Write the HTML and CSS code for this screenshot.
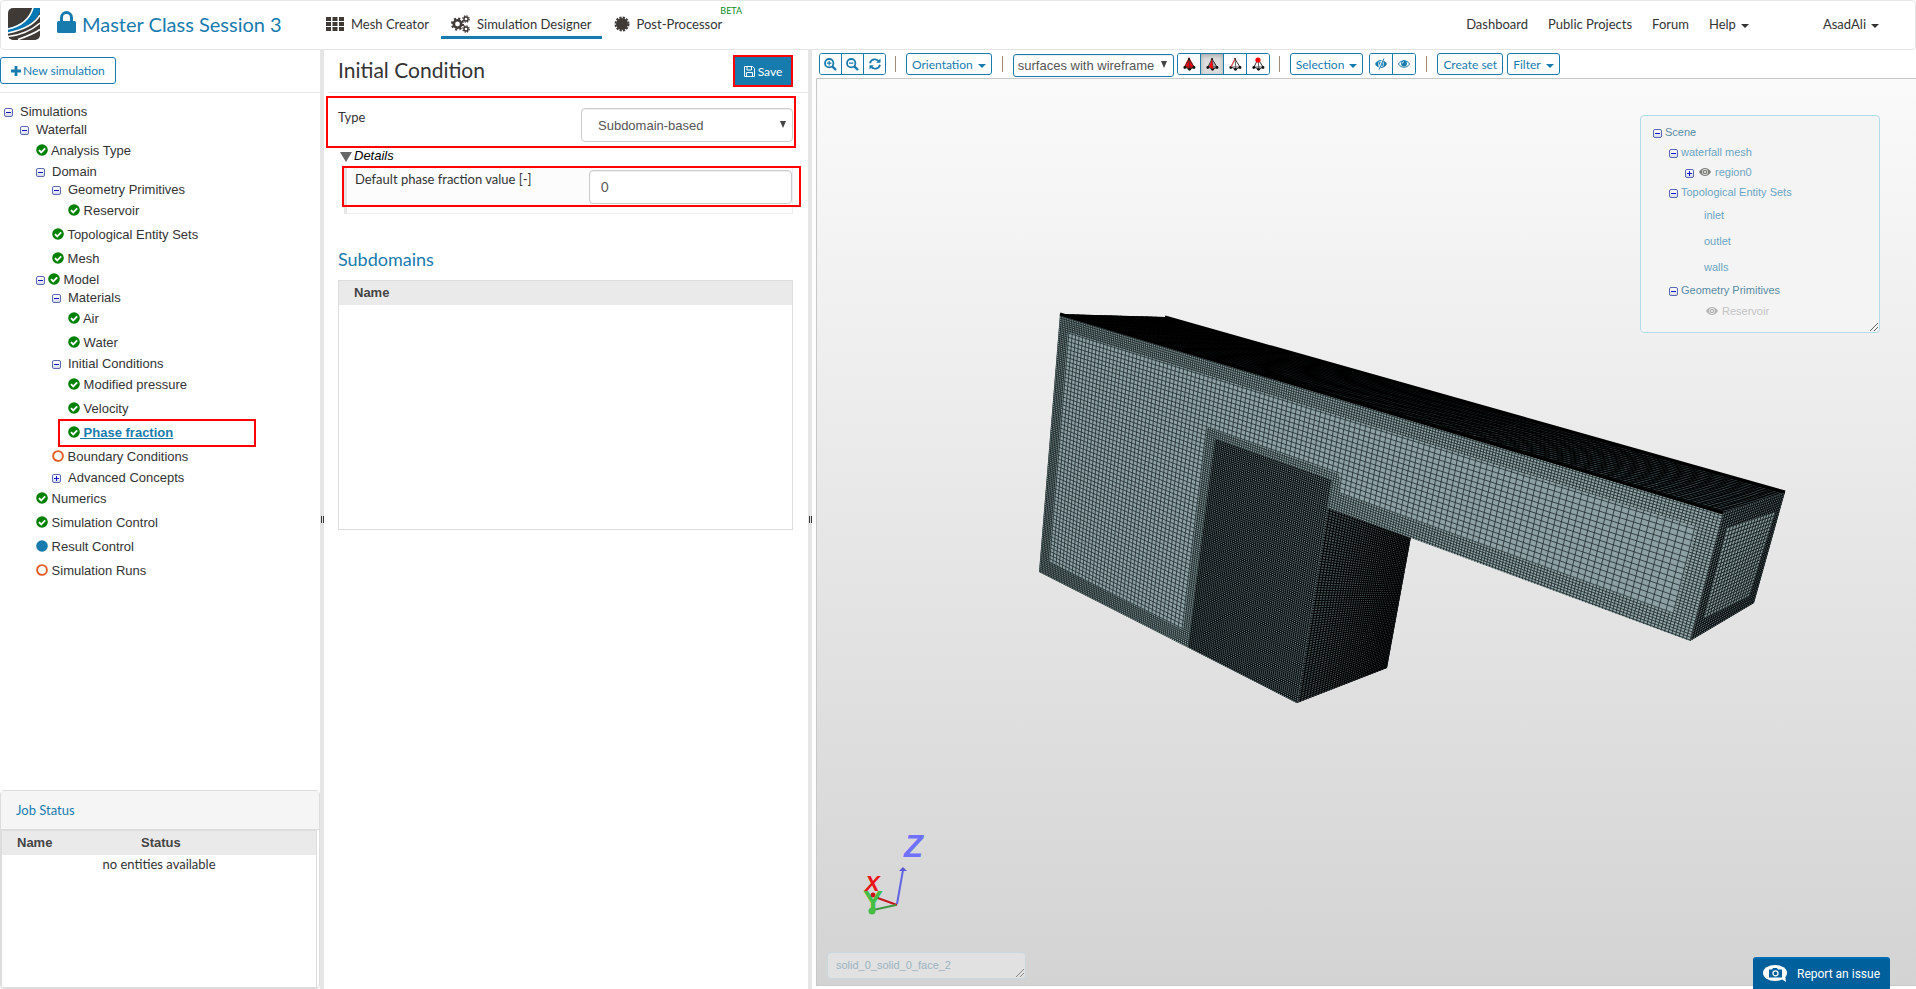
FILE: index.html
```html
<!DOCTYPE html>
<html lang="en">
<head>
    <meta charset="UTF-8">
    <meta name="viewport" content="width=device-width, initial-scale=1.0">
    <title>Master Class Session 3</title>
    <link rel="stylesheet" href="styles.css">
</head>
<body>
    <!-- shared icons -->
    <svg class="sprite" aria-hidden="true">
        <symbol id="check" viewBox="0 0 12 12"><circle cx="6" cy="6" r="5.8" fill="#008000"/><path d="M3 6.2l2.2 2.2 4-4" fill="none" stroke="#fff" stroke-width="1.9"/></symbol>
        <symbol id="ring" viewBox="0 0 12 12"><circle cx="6" cy="6" r="4.9" fill="none" stroke="#e05a26" stroke-width="1.9"/></symbol>
        <symbol id="dot" viewBox="0 0 12 12"><circle cx="6" cy="6" r="5.8" fill="#187bae"/></symbol>
        <symbol id="eye" viewBox="0 0 12 8"><path d="M0 4C3-1.200 9-1.200 12 4 9 9.200 3 9.200 0 4z" fill="currentColor"/><circle cx="6" cy="4" r="2.900" fill="#f4f4f4"/><circle cx="6" cy="4" r="2.300" fill="currentColor"/><circle cx="6" cy="4" r="1" fill="#f4f4f4"/></symbol>
        <symbol id="tetra" viewBox="0 0 14 14"><path d="M7 2L3 10l5 2.500 4-2.500z" stroke="#333" stroke-width="1"/><path d="M7 2l1 10.500M3 10l9 0" fill="none" stroke="#333" stroke-width=".8"/><g fill="#111"><circle cx="2.800" cy="10.500" r="1.400"/><circle cx="7.500" cy="12.300" r="1.400"/><circle cx="12" cy="10.500" r="1.400"/><circle cx="7" cy="2" r="1"/></g></symbol>
    </svg>

    <header class="navbar">
        <a class="logo" href="#" aria-label="Home">
            <svg width="32" height="32" viewBox="0 0 32 32">
                <rect width="32" height="32" rx="5" fill="#403a36"/>
                <path d="M25 0h7v4C28 14 16 21 0 25v-5C14 17 22 10 25 0z" fill="#0078b4"/>
                <path d="M25 0C22 10 14 18 0 21M32 7C27 16 15 22 0 25M32 15C25 21 14 27 0 28.500M32 21.500C27 25 20 28 10 31.500" fill="none" stroke="#fff" stroke-width="1.600"/>
            </svg>
        </a>
        <svg class="lock" width="19" height="22" viewBox="0 0 19 22"><path d="M4.500 11V6.500a5 5 0 0 1 10 0V11" fill="none" stroke="#187bae" stroke-width="3"/><rect y="10" width="19" height="12" rx="1.500" fill="#187bae"/></svg>
        <h1>Master Class Session 3</h1>
        <nav class="modes">
            <a href="#">
                <svg width="18" height="14" viewBox="0 0 18 14" fill="#403a36"><path d="M0 0h5v4H0zM6.500 0h5v4h-5zM13 0h5v4h-5zM0 5h5v4H0zM6.500 5h5v4h-5zM13 5h5v4h-5zM0 10h5v4H0zM6.500 10h5v4h-5zM13 10h5v4h-5z"/></svg>
                Mesh Creator
            </a>
            <a href="#" class="active">
                <svg width="19" height="18" viewBox="0 0 19 18" fill="none" stroke="#403a36"><circle cx="6.500" cy="9" r="3.700" stroke-width="2.600"/><circle cx="6.500" cy="9" r="5.600" stroke-width="2" stroke-dasharray="2.200 2.200"/><circle cx="15" cy="4" r="2" stroke-width="1.400"/><circle cx="15" cy="4" r="3.100" stroke-width="1.400" stroke-dasharray="1.400 1.030"/><circle cx="15" cy="14" r="2" stroke-width="1.400"/><circle cx="15" cy="14" r="3.100" stroke-width="1.400" stroke-dasharray="1.400 1.030"/></svg>
                Simulation Designer
            </a>
            <a href="#">
                <svg width="16" height="16" viewBox="0 0 16 16"><circle cx="8" cy="8" r="6" fill="#403a36"/><circle cx="8" cy="8" r="6.500" fill="none" stroke="#403a36" stroke-width="2" stroke-dasharray="2.200 1.203"/></svg>
                Post-Processor
                <sup class="beta">BETA</sup>
            </a>
        </nav>
        <nav class="links">
            <a href="#">Dashboard</a>
            <a href="#">Public Projects</a>
            <a href="#">Forum</a>
            <a href="#" class="caret">Help</a>
            <a href="#" class="caret user">AsadAli</a>
        </nav>
    </header>

    <main class="workspace">
        <aside class="sidebar">
            <div class="actions">
                <button class="btn new-btn"><svg width="10" height="10" viewBox="0 0 10 10"><path d="M5 0v10M0 5h10" stroke="#187bae" stroke-width="2.800"/></svg>New simulation</button>
            </div>
            <ul class="tree">
                <li><div class="row"><button class="toggle" aria-label="Collapse"></button><a>Simulations</a></div>
                <ul>
                    <li><div class="row"><button class="toggle" aria-label="Collapse"></button><a>Waterfall</a></div>
                    <ul>
                        <li class="leaf"><a><svg><use href="#check"/></svg> Analysis Type</a></li>
                        <li><div class="row"><button class="toggle" aria-label="Collapse"></button><a>Domain</a></div>
                        <ul>
                            <li><div class="row"><button class="toggle" aria-label="Collapse"></button><a>Geometry Primitives</a></div>
                                <ul><li class="leaf"><a><svg><use href="#check"/></svg> Reservoir</a></li></ul>
                            </li>
                            <li class="leaf"><a><svg><use href="#check"/></svg> Topological Entity Sets</a></li>
                            <li class="leaf"><a><svg><use href="#check"/></svg> Mesh</a></li>
                        </ul>
                        </li>
                        <li><div class="row tight"><button class="toggle" aria-label="Collapse"></button><a><svg><use href="#check"/></svg> Model</a></div>
                        <ul>
                            <li><div class="row"><button class="toggle" aria-label="Collapse"></button><a>Materials</a></div>
                            <ul>
                                <li class="leaf"><a><svg><use href="#check"/></svg> Air</a></li>
                                <li class="leaf"><a><svg><use href="#check"/></svg> Water</a></li>
                            </ul>
                            </li>
                            <li><div class="row"><button class="toggle" aria-label="Collapse"></button><a>Initial Conditions</a></div>
                            <ul>
                                <li class="leaf"><a><svg><use href="#check"/></svg> Modified pressure</a></li>
                                <li class="leaf"><a><svg><use href="#check"/></svg> Velocity</a></li>
                                <li class="leaf selected marked"><a href="#"><svg><use href="#check"/></svg> Phase fraction</a></li>
                            </ul>
                            </li>
                            <li class="leaf"><a><svg><use href="#ring"/></svg> Boundary Conditions</a></li>
                            <li><div class="row"><button class="toggle closed" aria-label="Expand"></button><a>Advanced Concepts</a></div></li>
                        </ul>
                        </li>
                        <li class="leaf"><a><svg><use href="#check"/></svg> Numerics</a></li>
                        <li class="leaf"><a><svg><use href="#check"/></svg> Simulation Control</a></li>
                        <li class="leaf"><a><svg><use href="#dot"/></svg> Result Control</a></li>
                        <li class="leaf"><a><svg><use href="#ring"/></svg> Simulation Runs</a></li>
                    </ul>
                    </li>
                </ul>
                </li>
            </ul>
            <section class="jobs">
                <h3>Job Status</h3>
                <div class="jobs-body">
                    <table>
                        <thead><tr><th>Name</th><th>Status</th></tr></thead>
                        <tbody><tr><td colspan="2">no entities available</td></tr></tbody>
                    </table>
                </div>
            </section>
        </aside>

        <div class="splitter"></div>

        <section class="settings">
            <div class="settings-head">
                <h2>Initial Condition</h2>
                <button class="save-btn marked"><svg width="11" height="11" viewBox="0 0 11 11" fill="none" stroke="#fff"><path d="M.5.5h8l2 2v8H.5zM3 .5v3.500h4.500V.5M2.500 10.500V6.500h6v4"/></svg>Save</button>
            </div>
            <div class="field type-field marked">
                <label for="type">Type</label>
                <div class="select">
                    <select id="type"><option>Subdomain-based</option></select>
                </div>
            </div>
            <div class="details-title">Details</div>
            <div class="field details marked">
                <label for="fraction">Default phase fraction value [-]</label>
                <input type="text" id="fraction" value="0">
            </div>
            <h3>Subdomains</h3>
            <div class="subdomains">
                <table><thead><tr><th>Name</th></tr></thead></table>
            </div>
        </section>

        <div class="splitter"></div>

        <section class="viewer">
            <div class="toolbar">
                <div class="group zoom">
                    <button aria-label="Zoom in"><svg width="13" height="13" viewBox="0 0 13 13" fill="none" stroke="#187bae" stroke-width="1.800"><circle cx="5.200" cy="5.200" r="4.200"/><path d="M8.300 8.300L12 12" stroke-width="2.400"/><path d="M3 5.200h4.400M5.200 3v4.400" stroke-width="1.200"/></svg></button>
                    <button aria-label="Zoom out"><svg width="13" height="13" viewBox="0 0 13 13" fill="none" stroke="#187bae" stroke-width="1.800"><circle cx="5.200" cy="5.200" r="4.200"/><path d="M8.300 8.300L12 12" stroke-width="2.400"/><path d="M3 5.200h4.400" stroke-width="1.200"/></svg></button>
                    <button aria-label="Reset view"><svg width="12" height="12" viewBox="0 0 12 12" fill="none" stroke="#187bae" stroke-width="1.800"><path d="M1 5.200a5 5 0 0 1 9-1.700M11 6.800a5 5 0 0 1-9 1.700"/><path d="M11.500.5v4.300H7.200zM.5 11.500V7.200h4.300z" fill="#187bae" stroke="none"/></svg></button>
                </div>
                <span class="bar"></span>
                <button class="btn caret">Orientation</button>
                <span class="bar"></span>
                <div class="select small">
                    <select aria-label="Render mode"><option>surfaces with wireframe</option></select>
                </div>
                <div class="group picks">
                    <button aria-label="Pick volume"><svg width="14" height="14" viewBox="0 0 14 14"><path d="M7 0l5.500 10L8 12.500 2 10z" fill="#f00"/><use href="#tetra" fill="#f00"/></svg></button>
                    <button class="on" aria-label="Pick face"><svg width="14" height="14" viewBox="0 0 14 14"><use href="#tetra" fill="#aaa"/><path d="M7 2L4 10l4 2z" fill="#f00"/></svg></button>
                    <button aria-label="Pick edge"><svg width="14" height="14" viewBox="0 0 14 14"><use href="#tetra" fill="#fff"/><path d="M7 2L3 10" stroke="#f55"/></svg></button>
                    <button aria-label="Pick node"><svg width="14" height="14" viewBox="0 0 14 14"><use href="#tetra" fill="#fff"/><circle cx="7" cy="3" r="2.600" fill="#f00"/></svg></button>
                </div>
                <span class="bar"></span>
                <button class="btn caret">Selection</button>
                <div class="group eyes">
                    <button aria-label="Hide selection"><svg width="12" height="12" viewBox="0 -2 12 12"><use href="#eye" width="12" height="8"/><path d="M3.500 9.500l5-11" stroke="#fff" stroke-width="2"/><path d="M4 9.500l5-11" stroke="#187bae"/></svg></button>
                    <button aria-label="Show all"><svg width="12" height="8" viewBox="0 0 12 8"><path d="M.5 4C3-.4 9-.4 11.500 4 9 8.400 3 8.400.5 4z" fill="none" stroke="#187bae"/><circle cx="6" cy="3.500" r="2.900" fill="#187bae"/><path d="M4.300 3.500A1.700 1.700 0 0 1 6 1.800" fill="none" stroke="#fff" stroke-width=".8"/></svg></button>
                </div>
                <span class="bar"></span>
                <button class="btn">Create set</button>
                <button class="btn caret filter">Filter</button>
            </div>

            <div class="canvas">
                <svg class="scene" viewBox="817 79 1099 906" preserveAspectRatio="xMidYMid meet">
                    <g id="mesh"></g>
                    <g class="axes">
                        <path d="M897 905L875 897" stroke="#c8141e"/>
                        <path d="M896 905L873 910" stroke="#419641"/>
                        <path d="M897 904L903 870" stroke="#6464e6"/>
                        <path d="M903 867l4 4h-8z" fill="#5a5ad2"/>
                        <circle cx="873" cy="895" r="2.500" fill="#d01018"/>
                        <text x="865" y="891" font-size="22" fill="#eb1414">X</text>
                        <text x="863" y="911" font-size="30" fill="#46be46" class="upright">Y</text>
                        <text x="904" y="857" font-size="31" fill="#7070ff">Z</text>
                        <circle cx="872" cy="911" r="3.500" fill="#46be46"/>
                    </g>
                </svg>
                <div class="scene-tree">
                    <ul>
                        <li><div class="row"><button class="toggle" aria-label="Collapse"></button><a class="group-name">Scene</a></div>
                        <ul>
                            <li><div class="row"><button class="toggle" aria-label="Collapse"></button><a>waterfall mesh</a></div>
                                <ul><li><div class="row"><button class="toggle closed" aria-label="Expand"></button><svg class="eye"><use href="#eye"/></svg><a>region0</a></div></li></ul>
                            </li>
                            <li><div class="row"><button class="toggle" aria-label="Collapse"></button><a>Topological Entity Sets</a></div>
                                <ul class="sets">
                                    <li>inlet</li>
                                    <li>outlet</li>
                                    <li>walls</li>
                                </ul>
                            </li>
                            <li><div class="row"><button class="toggle" aria-label="Collapse"></button><a class="group-name">Geometry Primitives</a></div>
                                <div class="row hidden-item"><svg class="eye"><use href="#eye"/></svg><a>Reservoir</a></div>
                            </li>
                        </ul>
                        </li>
                    </ul>
                    <svg class="grip" width="8" height="8"><path d="M0 8l8-8M4 8l4-4" stroke="#666"/></svg>
                </div>
                <div class="pick-info">solid_0_solid_0_face_2<svg class="grip" width="8" height="8"><path d="M0 8l8-8M4 8l4-4" stroke="#888"/></svg></div>
            </div>
        </section>
    </main>

    <button class="report">
        <svg width="24" height="18" viewBox="0 0 24 18"><ellipse cx="12" cy="8" rx="12" ry="8" fill="#fff"/><path d="M17 13l6 4-1-7z" fill="#fff"/><path d="M6 4.500h3l1-1.500h4l1 1.500h4v8H6z" fill="#00609c"/><circle cx="12.500" cy="8.300" r="2.500" fill="none" stroke="#fff" stroke-width="1.300"/></svg>
        Report an issue
    </button>

    <script src="mesh.js"></script>
</body>
</html>
```
FILE: styles.css
```css
*, *::before, *::after {
    box-sizing: border-box;
}

body {
    margin: 0;
    height: 100vh;
    display: flex;
    flex-direction: column;
    overflow: hidden;
    background: #fff;
    color: #333;
    font-family: Lato, "Liberation Sans", sans-serif;
    font-size: 13px;
}

h1, h2, h3, ul {
    margin: 0;
    padding: 0;
    font-weight: normal;
}

ul {
    list-style: none;
}

a {
    color: inherit;
    text-decoration: none;
}

button, input, select {
    margin: 0;
    font-family: inherit;
}

button {
    cursor: pointer;
}

table {
    width: 100%;
    border-collapse: collapse;
}

th {
    height: 24px;
    padding: 0 15px 2px;
    background: #eaeaea;
    color: #444;
    font: bold 13px "Liberation Sans", sans-serif;
    text-align: left;
}

.sprite {
    position: absolute;
    width: 0;
    height: 0;
}

/* top bar */
.navbar {
    flex: none;
    display: flex;
    align-items: center;
    height: 50px;
    padding: 0 36px 2px 7px;
    border: 1px solid #e5e5e5;
    border-radius: 4px;
}

.logo {
    display: flex;
}

.lock {
    margin: 0 6px 4px 17px;
}

h1 {
    width: 244px;
    color: #187bae;
    font-size: 20px;
    line-height: 22px;
    padding-bottom: 1px;
    white-space: nowrap;
}

.modes {
    display: flex;
    gap: 22px;
}

.modes a {
    position: relative;
    display: flex;
    align-items: center;
    gap: 7px;
    height: 30px;
}

.modes a.active::after {
    content: "";
    position: absolute;
    left: -10px;
    right: -10px;
    bottom: 0;
    height: 3px;
    background: #187bae;
}

.beta {
    position: absolute;
    left: 100%;
    top: -4px;
    margin-left: -2px;
    color: #0a8a1c;
    font-size: 9px;
}

.links {
    display: flex;
    gap: 20px;
    margin-left: auto;
}

.user {
    margin-left: 54px;
}

.caret::after {
    content: "";
    display: inline-block;
    margin-left: 5px;
    vertical-align: 1px;
    border: 4px solid transparent;
    border-top-color: currentColor;
    border-bottom: 0;
}

/* columns */
.workspace {
    flex: 1;
    min-height: 0;
    display: grid;
    grid-template-columns: 320px 4px 484px 4px 1fr;
}

.splitter {
    display: flex;
    align-items: center;
    justify-content: flex-end;
    background: #e5e5e5;
}

.splitter::before {
    content: "";
    width: 3px;
    height: 7px;
    border: solid #333;
    border-width: 0 1px;
}

.sidebar {
    display: flex;
    flex-direction: column;
    min-height: 0;
}

.actions {
    height: 43px;
    padding-top: 7px;
    border-bottom: 1px solid #e5e5e5;
}

.btn {
    height: 22px;
    padding: 0 5px;
    background: #fff;
    border: 1px solid #187bae;
    border-radius: 3px;
    color: #187bae;
    font-size: 12px;
}

.btn.new-btn {
    display: flex;
    align-items: center;
    gap: 2px;
    height: 27px;
    padding: 0 10px;
}

/* trees */
.tree {
    flex: 1;
    padding: 10px 0 0 4px;
    font: 13px "Liberation Sans", sans-serif;
}

.tree ul, .scene-tree ul ul {
    padding-left: 16px;
}

.row {
    display: flex;
    align-items: center;
    height: 18px;
}

.tree .row {
    padding-bottom: 2px;
}

.row.tight .toggle {
    margin-right: 3px;
}

.leaf {
    line-height: 24px;
    height: 24px;
}

.tree a svg {
    width: 12px;
    height: 12px;
    vertical-align: -1px;
}

.toggle {
    flex: none;
    width: 9px;
    height: 9px;
    margin: 2px 7px 0 0;
    padding: 0;
    border: 1px solid #5a68b4;
    border-radius: 2px;
    background:
        linear-gradient(#1414c8, #1414c8) center / 5px 1px no-repeat,
        linear-gradient(#fff, #d8dcec);
}

.toggle.closed {
    background:
        linear-gradient(#1414c8, #1414c8) center / 5px 1px no-repeat,
        linear-gradient(#1414c8, #1414c8) center / 1px 5px no-repeat,
        linear-gradient(#fff, #d8dcec);
}

.selected a {
    color: #187bae;
    font-weight: bold;
    text-decoration: underline;
}

/* red highlight frames */
.marked {
    position: relative;
}

.marked::before {
    content: "";
    position: absolute;
    z-index: 2;
    inset: 0;
    border: 2px solid #f00;
    pointer-events: none;
}

.leaf.marked::before {
    inset: -2px auto -2px -10px;
    width: 198px;
}

/* job status */
.jobs {
    height: 199px;
    display: flex;
    flex-direction: column;
    border: 1px solid #ddd;
    border-radius: 4px;
}

.jobs h3 {
    height: 39px;
    padding-left: 15px;
    background: #f5f5f5;
    border-bottom: 1px solid #ddd;
    color: #187bae;
    font-size: 13px;
    line-height: 38px;
}

.jobs-body {
    flex: 1;
    margin-right: 2px;
    border: 1px solid #ddd;
}

.jobs th {
    width: 124px;
}

.jobs th + th {
    width: auto;
}

.jobs td {
    padding: 1px 0;
    text-align: center;
    font-size: 13px;
}

/* settings column */
.settings-head {
    display: flex;
    justify-content: space-between;
    height: 43px;
    margin-left: 4px;
    padding: 5px 15px 0 10px;
    border-bottom: 1px solid #e5e5e5;
}

.settings h2 {
    font-size: 21px;
    line-height: 30px;
}

.save-btn {
    display: flex;
    align-items: center;
    justify-content: center;
    gap: 3px;
    width: 60px;
    height: 32px;
    padding: 0;
    background: #187bae;
    border: 0;
    color: #fff;
    font-size: 12px;
}

.field {
    display: flex;
    justify-content: space-between;
}

.field label {
    line-height: 18px;
}

.type-field {
    height: 52px;
    margin: 3px 12px 0 2px;
    padding: 12px 3px 0 12px;
}

.select {
    position: relative;
    width: 212px;
}

.select::after {
    content: "";
    position: absolute;
    right: 7px;
    top: 13px;
    border: 3px solid transparent;
    border-top: 7px solid #444;
    border-bottom: 0;
    pointer-events: none;
}

select {
    appearance: none;
    width: 100%;
    height: 34px;
    padding: 0 16px;
    background: #fff;
    border: 1px solid #ccc;
    border-radius: 4px;
    box-shadow: inset 0 1px 1px rgba(0, 0, 0, 0.075);
    color: #555;
    font: 13px "Liberation Sans", sans-serif;
}

.details-title {
    display: flex;
    align-items: center;
    gap: 2px;
    height: 18px;
    padding: 0 0 3px 16px;
    color: #000;
    font: italic 13px "Liberation Sans", sans-serif;
}

.details-title::before {
    content: "";
    margin-top: 3px;
    border: 6px solid transparent;
    border-top: 10px solid #666;
    border-bottom: 0;
}

.details {
    height: 48px;
    margin: 0 15px 0 20px;
    padding: 3px 0 0 8px;
    background: #fcfcfc;
    border: 1px solid #eee;
    border-left: 3px solid #e5e5e5;
}

.details.marked::before {
    inset: -1px -9px 6px -5px;
}

.details input {
    width: 203px;
    height: 34px;
    padding: 0 11px;
    background: #fff;
    border: 1px solid #ccc;
    border-radius: 4px;
    box-shadow: inset 0 1px 1px rgba(0, 0, 0, 0.075);
    color: #555;
    font-size: 13px;
}

.settings h3 {
    margin: 33px 0 9px 14px;
    color: #187bae;
    font-size: 18px;
    line-height: 24px;
}

.subdomains {
    height: 250px;
    margin: 0 15px 0 14px;
    border: 1px solid #ddd;
}

/* viewer */
.viewer {
    display: flex;
    flex-direction: column;
    min-width: 0;
}

.toolbar {
    display: flex;
    height: 28px;
    padding: 3px 0 0 7px;
}

.group {
    display: flex;
    height: 22px;
    margin-right: 9px;
    border: 1px solid #187bae;
    border-radius: 3px;
    overflow: hidden;
}

.group button {
    flex: 1;
    display: flex;
    align-items: center;
    justify-content: center;
    padding: 0;
    background: #fff;
    border: 0;
    color: #187bae;
}

.group button + button {
    border-left: 1px solid #187bae;
}

.group button.on {
    background: #ddd;
    box-shadow: inset 0 2px 4px #aaa;
}

.zoom {
    width: 67px;
}

.picks {
    width: 93px;
}

.eyes {
    width: 47px;
    margin: 0 10px 0 6px;
}

.bar {
    width: 1px;
    height: 16px;
    margin: 3px 10px 0 0;
    background: #a08c78;
}

.toolbar .caret {
    margin-right: 10px;
}

.toolbar .caret:has(+ .eyes) {
    margin-right: 0;
}

.toolbar .filter {
    margin-left: 4px;
}

.select.small {
    width: 161px;
    margin-right: 3px;
}

.select.small::after {
    top: 8px;
}

.select.small select {
    height: 23px;
    margin-top: 1px;
    padding: 0 4px;
    border-color: #187bae;
    border-radius: 3px;
}

.canvas {
    position: relative;
    flex: 1;
    min-height: 0;
    margin: 0 0 3px 4px;
    border: 1px solid #c8c8c8;
    border-right: 0;
    background: linear-gradient(#fafafa, #d3d3d3);
}

.scene {
    display: block;
    width: 100%;
    height: 100%;
}

.axes path {
    stroke-width: 2;
}

.axes text {
    font-family: "Liberation Sans", sans-serif;
    font-weight: bold;
    font-style: italic;
}

.axes .upright {
    font-style: normal;
}

.scene-tree {
    position: absolute;
    top: 36px;
    right: 36px;
    width: 240px;
    height: 218px;
    padding: 6px 12px;
    border: 1px solid #b4dce8;
    border-radius: 4px;
    background: #f4f4f4;
    color: #6ea5c3;
    font: 11px "Liberation Sans", sans-serif;
}

.scene-tree .row {
    height: 20px;
}

.scene-tree .toggle {
    margin: 2px 3px 0 0;
}

.group-name {
    color: #5a8ca5;
}

.eye {
    width: 12px;
    height: 8px;
    margin: 0 4px 0 2px;
    color: #7d7d78;
}

.scene-tree .sets {
    padding-left: 35px;
    line-height: 26px;
}

.hidden-item {
    margin: 1px 0 0 35px;
    color: #c3c3c3;
}

.hidden-item .eye {
    color: #b4b4b4;
}

.grip {
    position: absolute;
    right: 1px;
    bottom: 1px;
}

.pick-info {
    position: absolute;
    left: 10px;
    bottom: 6px;
    width: 199px;
    height: 27px;
    padding-left: 8px;
    border: 1px solid #c8d8de;
    border-radius: 4px;
    background: #e1e1e1;
    color: #9bb4c1;
    font: 11px/25px "Liberation Sans", sans-serif;
}

.report {
    position: fixed;
    right: 26px;
    bottom: 0;
    display: flex;
    align-items: center;
    gap: 10px;
    height: 32px;
    padding: 0 10px;
    background: #00609c;
    border: 0;
    border-top: 2px solid #006eb4;
    border-radius: 3px 3px 0 0;
    color: #fff;
    font: 12px Roboto, sans-serif;
}
```
FILE: mesh.js
```js
const mesh = document.getElementById("mesh");
const svgNS = "http://www.w3.org/2000/svg";
let clipCount = 0;

function add(parent, name, attrs) {
    const el = document.createElementNS(svgNS, name);
    for (const key in attrs) {
        el.setAttribute(key, attrs[key]);
    }
    parent.appendChild(el);
    return el;
}

// maps the unit square on a quad: top left, top right, bottom right, bottom left
function project([p0, p1, p2, p3]) {
    const dx1 = p1[0] - p2[0], dx2 = p3[0] - p2[0], dx3 = p0[0] - p1[0] + p2[0] - p3[0];
    const dy1 = p1[1] - p2[1], dy2 = p3[1] - p2[1], dy3 = p0[1] - p1[1] + p2[1] - p3[1];
    const det = dx1 * dy2 - dx2 * dy1;
    const g = (dx3 * dy2 - dx2 * dy3) / det;
    const h = (dx1 * dy3 - dx3 * dy1) / det;
    return (u, v) => {
        const w = g * u + h * v + 1;
        const x = (p1[0] - p0[0] + g * p1[0]) * u + (p3[0] - p0[0] + h * p3[0]) * v + p0[0];
        const y = (p1[1] - p0[1] + g * p1[1]) * u + (p3[1] - p0[1] + h * p3[1]) * v + p0[1];
        return (x / w).toFixed(1) + " " + (y / w).toFixed(1);
    };
}

// one face: filled shape with a cols x rows grid clipped to it
function drawFace(shape, quad, cols, rows, fill, stroke, width) {
    const id = "clip" + clipCount++;
    const clip = add(mesh, "clipPath", { id });
    add(clip, "polygon", { points: shape.join(" ") });
    add(mesh, "polygon", { points: shape.join(" "), fill });

    const at = project(quad);
    let d = "";
    for (let i = 0; i <= cols; i++) {
        d += "M" + at(i / cols, 0) + "L" + at(i / cols, 1);
    }
    for (let j = 0; j <= rows; j++) {
        d += "M" + at(0, j / rows) + "L" + at(1, j / rows);
    }
    add(mesh, "path", { d, fill: "none", stroke, "stroke-width": width, "clip-path": `url(#${id})` });
}

const front = [[1060, 314], [1723, 513], [1630, 873], [1039, 572]];
const roof = [[1060, 314], [1165, 317], [1785, 492], [1723, 513]];
const end = [[1723, 513], [1785, 492], [1754, 603], [1690, 641]];
const endInner = [[1727, 528], [1775, 512], [1749, 596], [1704, 618]];
const side = [[1327, 507], [1411, 537], [1387, 668], [1297, 703]];

drawFace(roof, roof, 20, 180, "#36464a", "#000", 1);
drawFace(side, side, 40, 76, "#475558", "#000", 1);

// front surface: fine border layer first, coarse cells inside
drawFace([[1060, 314], [1723, 513], [1690, 641], [1327, 507], [1297, 703], [1039, 572]],
    front, 260, 136, "#92a6a8", "#182223", 0.8);
drawFace([[1068, 332], [1697, 527], [1673, 613], [1341, 493], [1339, 474], [1207, 427], [1183, 630], [1049, 561]],
    front, 130, 68, "#8da1a4", "#1e2a2c", 0.8);

// refined column
drawFace([[1215, 439], [1332, 480], [1297, 703], [1188, 647]], front, 300, 150, "#7a898d", "#0a1011", 1);

drawFace(end, end, 28, 46, "#66757a", "#0a0e0f", 1);
drawFace(endInner, endInner, 16, 24, "#8a9ea0", "#1a2223", 1);
add(mesh, "path", { d: "M1165 317L1785 492M1060 314L1723 513", fill: "none", stroke: "#000", "stroke-width": 3 });
```
